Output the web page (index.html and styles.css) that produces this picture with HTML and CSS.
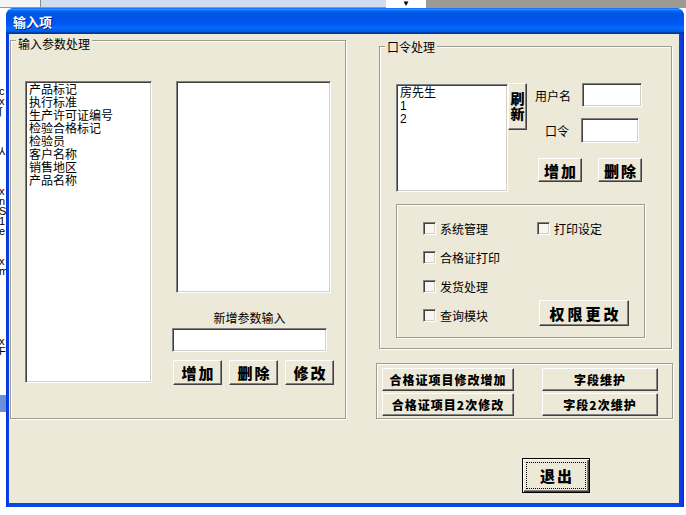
FILE: index.html
```html
<!DOCTYPE html>
<html lang="zh-CN">
<head>
    <meta charset="UTF-8">
    <title>输入项</title>
    <link rel="stylesheet" href="styles.css">
</head>
<body>
    <!-- whatever is left of the desktop behind the dialog -->
    <div class="desk-top">
        <div class="desk-field"></div>
        <div class="desk-combo"><span class="combo-arrow">▼</span></div>
        <div class="desk-gray"></div>
    </div>
    <div class="desk-left">
        <pre class="desk-text">c
x
ʃ



⅄



x
n
S
1
e


x
m






x
F</pre>
        <div class="desk-sel"></div>
    </div>

    <div class="window">
        <div class="title-bar">输入项</div>
        <div class="client">

            <div class="group group-params">
                <span class="group-label">输入参数处理</span>
                <div class="list list-params">
                    <div>产品标记</div>
                    <div>执行标准</div>
                    <div>生产许可证编号</div>
                    <div>检验合格标记</div>
                    <div>检验员</div>
                    <div>客户名称</div>
                    <div>销售地区</div>
                    <div>产品名称</div>
                </div>
                <div class="param-side">
                    <div class="list list-new"></div>
                    <div class="caption">新增参数输入</div>
                    <div class="edit edit-param"></div>
                    <div class="btn-row">
                        <button class="btn btn-big">增加</button>
                        <button class="btn btn-big">删除</button>
                        <button class="btn btn-big">修改</button>
                    </div>
                </div>
            </div>

            <div class="right-col">
                <div class="group group-pass">
                    <span class="group-label">口令处理</span>
                    <div class="pass-top">
                        <div class="list list-users">
                            <div>房先生</div>
                            <div>1</div>
                            <div>2</div>
                        </div>
                        <button class="btn btn-refresh"><span class="refresh-text">刷新</span></button>
                        <div class="login-form">
                            <div class="form-row row-user">
                                <span class="form-label">用户名</span>
                                <div class="edit edit-user"></div>
                            </div>
                            <div class="form-row row-pass">
                                <span class="form-label label-pass">口令</span>
                                <div class="edit edit-pass"></div>
                            </div>
                            <div class="form-row row-btns">
                                <button class="btn btn-big btn-user">增加</button>
                                <button class="btn btn-big btn-user">删除</button>
                            </div>
                        </div>
                    </div>
                    <div class="panel perm-panel">
                        <label class="check"><span class="check-box"></span>系统管理</label>
                        <label class="check"><span class="check-box"></span>打印设定</label>
                        <label class="check"><span class="check-box"></span>合格证打印</label>
                        <span></span>
                        <label class="check"><span class="check-box"></span>发货处理</label>
                        <span></span>
                        <label class="check"><span class="check-box"></span>查询模块</label>
                        <button class="btn btn-perm">权限更改</button>
                    </div>
                </div>

                <div class="panel bottom-panel">
                    <button class="btn btn-small">合格证项目修改增加</button>
                    <button class="btn btn-small">字段维护</button>
                    <button class="btn btn-small">合格证项目2次修改</button>
                    <button class="btn btn-small">字段2次维护</button>
                </div>

                <button class="btn btn-exit">退出</button>
            </div>

        </div>
    </div>
</body>
</html>
```

FILE: styles.css
```css
body {
    margin: 0;
    width: 686px;
    height: 515px;
    overflow: hidden;
    position: relative;
    background: #fff;
    font-family: "Liberation Sans", "Noto Sans CJK SC", sans-serif;
    font-size: 12px;
    color: #000;
}

/* desktop scraps */
.desk-top {
    display: flex;
    height: 8px;
}

.desk-field {
    width: 386px;
    background: linear-gradient(to right, #f4f4f4 0, #f4f4f4 40px, #8c8c8c 40px, #8c8c8c 41px, #d3dbee 41px);
    border-bottom: 1px solid #7f9db9;
}

.desk-combo {
    width: 40px;
    background: #fff;
    display: flex;
    justify-content: center;
    align-items: flex-end;
}

.combo-arrow {
    font-size: 8px;
    line-height: 8px;
}

.desk-gray {
    flex: 1;
    background: #9d9a93;
}

.desk-left {
    position: absolute;
    left: 0;
    top: 8px;
    width: 6px;
    height: 507px;
    overflow: hidden;
    background: #fff;
}

.desk-text {
    margin: 78px 0 0 -1px;
    font-family: "Liberation Sans", sans-serif;
    font-size: 11px;
    line-height: 10px;
}

.desk-sel {
    margin-top: 39px;
    height: 17px;
    background: #6d8fd8;
}

/* dialog window */
.window {
    position: absolute;
    left: 6px;
    top: 8px;
    width: 678px;
    height: 499px;
    display: flex;
    flex-direction: column;
    border-radius: 8px 8px 0 0;
    background: linear-gradient(to right, #0831d9, #0a48e6 3px, #0a48e6 672px, #0831d9);
    overflow: hidden;
}

.title-bar {
    height: 26px;
    padding-left: 7px;
    line-height: 28px;
    font-family: "Noto Sans CJK SC", sans-serif;
    font-size: 13px;
    font-weight: 700;
    color: #fff;
    text-shadow: 1px 1px #0a1883;
    background: linear-gradient(to bottom, #0058ee 0%, #3593ff 4%, #288eff 6%, #127dff 8%, #036ffc 10%, #0262ee 14%, #0057e5 20%, #0054e3 24%, #0055eb 56%, #005bf5 66%, #026afe 76%, #0062ef 86%, #0052d6 92%, #0040ab 94%, #003092 100%);
}

.client {
    flex: 1;
    margin: 0 5px 4px 3px;
    padding: 6px 0 0 1px;
    background: #ece9d8;
    display: flex;
    align-items: flex-start;
}

/* group boxes */
.group,
.panel {
    position: relative;
    box-sizing: border-box;
    border: 1px solid #9e9c92;
    box-shadow: inset 1px 1px #fff, 1px 1px #fff;
}

.group-label {
    position: absolute;
    left: 5px;
    padding: 0 2px;
    line-height: 14px;
    background: #ece9d8;
    font-family: "Noto Sans CJK SC", sans-serif;
}

.group-params {
    width: 336px;
    height: 379px;
    padding: 40px 0 0 14px;
    display: flex;
    align-items: flex-start;
}

.group-params .group-label {
    top: -4px;
}

/* sunken controls */
.list,
.edit {
    box-sizing: border-box;
    background: #fff;
    border: 1px solid;
    border-color: #808080 #fff #fff #808080;
    box-shadow: inset 1px 1px #404040, inset -1px -1px #d4d0c8;
}

.list {
    padding: 2px 3px;
    line-height: 13px;
}

.list-params {
    width: 127px;
    height: 302px;
}

.param-side {
    margin-left: 20px;
    width: 162px;
}

.list-new {
    margin-left: 4px;
    width: 155px;
    height: 212px;
}

.caption {
    margin-top: 18px;
    width: 155px;
    text-align: center;
    line-height: 14px;
    font-family: "Noto Sans CJK SC", sans-serif;
}

.edit-param {
    margin-top: 3px;
    width: 155px;
    height: 24px;
}

.btn-row {
    margin: 8px 0 0 1px;
    display: flex;
    gap: 7px;
}

/* buttons */
.btn {
    box-sizing: border-box;
    margin: 0;
    padding: 0;
    background: #ece9d8;
    border: 1px solid;
    border-color: #fff #404040 #404040 #fff;
    box-shadow: inset -1px -1px #808080;
    font-family: "Noto Sans CJK SC", sans-serif;
    font-weight: 900;
    color: #000;
    line-height: 1;
}

.btn-big {
    width: 49px;
    height: 25px;
    font-size: 15px;
    letter-spacing: 2px;
    padding-left: 2px;
}

.right-col {
    margin-left: 29px;
    width: 298px;
    display: flex;
    flex-direction: column;
    align-items: flex-start;
}

.group-pass {
    margin: 6px 0 0 4px;
    width: 293px;
    height: 303px;
    padding: 37px 0 0 16px;
}

.group-pass .group-label {
    top: -7px;
}

.pass-top {
    display: flex;
    align-items: flex-start;
    height: 108px;
}

.list-users {
    width: 112px;
    height: 108px;
}

.btn-refresh {
    margin-top: -1px;
    width: 19px;
    height: 47px;
    display: flex;
    align-items: center;
    justify-content: center;
    font-size: 14px;
}

.refresh-text {
    writing-mode: vertical-rl;
    line-height: 16px;
    letter-spacing: 1px;
}

.login-form {
    margin-left: 8px;
}

.form-row {
    display: flex;
    align-items: center;
}

.form-label {
    font-family: "Noto Sans CJK SC", sans-serif;
    width: 47px;
}

.label-pass {
    width: 36px;
    padding-left: 10px;
}

.row-user {
    margin-top: -1px;
}

.edit-user {
    width: 60px;
    height: 24px;
}

.row-pass {
    margin-top: 11px;
}

.edit-pass {
    width: 58px;
    height: 25px;
}

.row-btns {
    margin: 15px 0 0 3px;
    gap: 16px;
}

.btn-user {
    width: 44px;
    height: 24px;
}

/* permission checks */
.perm-panel {
    margin-top: 12px;
    width: 249px;
    height: 134px;
    padding: 17px 0 0 26px;
    display: grid;
    grid-template-columns: 114px 1fr;
    grid-auto-rows: 29px;
    align-items: start;
}

.check {
    display: flex;
    align-items: center;
    gap: 4px;
    height: 13px;
    font-family: "Noto Sans CJK SC", sans-serif;
}

.check-box {
    box-sizing: border-box;
    width: 13px;
    height: 13px;
    background: #f7f6f1;
    border: 1px solid;
    border-color: #808080 #fff #fff #808080;
    box-shadow: inset 1px 1px #404040, inset -1px -1px #d4d0c8;
}

.btn-perm {
    margin: -9px 0 0 2px;
    width: 90px;
    height: 26px;
    font-size: 15px;
    letter-spacing: 3px;
    padding-left: 3px;
}

/* extra actions */
.bottom-panel {
    margin: 14px 0 0 1px;
    width: 297px;
    height: 56px;
    padding: 4px 0 0 5px;
    display: grid;
    grid-template-columns: 132px 116px;
    grid-auto-rows: 23px;
    column-gap: 28px;
    row-gap: 2px;
}

.btn-small {
    font-size: 12px;
    letter-spacing: 1px;
}

.btn-exit {
    margin: 39px 0 0 147px;
    width: 68px;
    height: 35px;
    border: 1px solid #000;
    box-shadow: inset 1px 1px #fff, inset -1px -1px #404040, inset -2px -2px #808080;
    outline: 1px dotted #000;
    outline-offset: -5px;
    font-size: 15px;
    letter-spacing: 2px;
    padding-left: 2px;
}
```
